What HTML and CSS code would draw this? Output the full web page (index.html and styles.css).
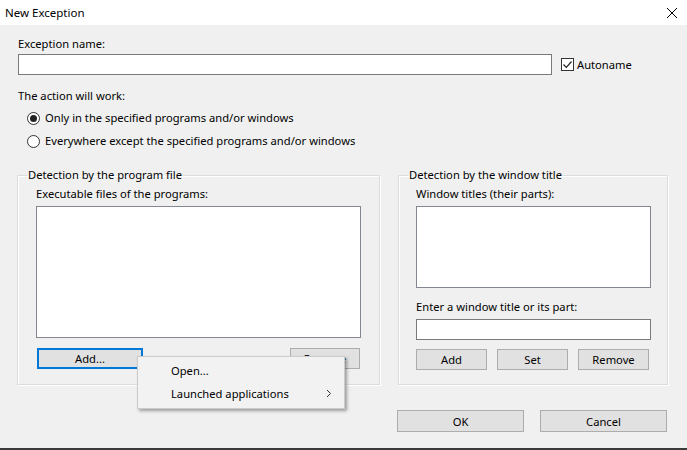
FILE: index.html
```html
<!DOCTYPE html>
<html lang="en">
<head>
    <meta charset="UTF-8">
    <title>New Exception</title>
    <link rel="stylesheet" href="styles.css">
</head>
<body>
    <div class="dialog">
        <div class="titlebar">
            <span class="title">New Exception</span>
            <svg class="close-icon" width="12" height="12" viewBox="0 0 12 12">
                <path d="M1 1 L11 11 M11 1 L1 11" stroke="#000" stroke-width="1" fill="none"/>
            </svg>
        </div>

        <div class="content">
            <div class="label">Exception name:</div>
            <div class="name-row">
                <div class="textbox name-box"></div>
                <label class="check">
                    <span class="checkbox">
                        <svg width="11" height="11" viewBox="0 0 11 11">
                            <path d="M1.5 5.5 L4.3 8.3 L9.5 2.5" stroke="#222" stroke-width="1.2" fill="none"/>
                        </svg>
                    </span>
                    Autoname
                </label>
            </div>

            <div class="label action-label">The action will work:</div>
            <div class="radios">
                <div class="radio-row"><span class="radio checked"></span>Only in the specified programs and/or windows</div>
                <div class="radio-row"><span class="radio"></span>Everywhere except the specified programs and/or windows</div>
            </div>

            <div class="groups">
                <fieldset class="group group-program">
                    <legend>Detection by the program file</legend>
                    <div class="label">Executable files of the programs:</div>
                    <div class="listbox list-programs"></div>
                    <div class="btn-row spread">
                        <div class="menu-anchor">
                            <button class="btn btn-add focused">Add...</button>
                            <div class="context-menu">
                                <div class="menu-item">Open...</div>
                                <div class="menu-item">Launched applications
                                    <svg class="chevron" width="6" height="9" viewBox="0 0 6 9">
                                        <path d="M1 1 L4.5 4.5 L1 8" stroke="#333" stroke-width="1" fill="none"/>
                                    </svg>
                                </div>
                            </div>
                        </div>
                        <button class="btn btn-remove-prog">Remove</button>
                    </div>
                </fieldset>

                <fieldset class="group group-window">
                    <legend>Detection by the window title</legend>
                    <div class="label">Window titles (their parts):</div>
                    <div class="listbox list-titles"></div>
                    <div class="label enter-label">Enter a window title or its part:</div>
                    <div class="textbox title-box"></div>
                    <div class="btn-row">
                        <button class="btn btn-small">Add</button>
                        <button class="btn btn-small">Set</button>
                        <button class="btn btn-small">Remove</button>
                    </div>
                </fieldset>
            </div>

            <div class="footer-buttons">
                <button class="btn btn-wide">OK</button>
                <button class="btn btn-wide">Cancel</button>
            </div>
        </div>
    </div>
</body>
</html>
```

FILE: styles.css
```css
/* General Styling */
body {
    margin: 0;
    padding: 0;
    font-family: 'Noto Sans', 'Open Sans', sans-serif;
    font-size: 11.2px;
    color: #000;
    background-color: #f0f0f0;
}

.dialog {
    width: 687px;
    height: 450px;
    box-sizing: border-box;
    background-color: #f0f0f0;
    border-bottom: 2px solid #3a3a3a;
    overflow: hidden;
}

/* Title bar */
.titlebar {
    height: 25px;
    background-color: #fff;
    display: flex;
    align-items: center;
    justify-content: space-between;
    padding: 0 9px 0 5px;
}

.title {
    font-size: 11.5px;
    line-height: 16px;
}

.content {
    padding: 11px 19px 0 18px;
}

.label {
    line-height: 16px;
    height: 16px;
}

/* Exception name */
.name-row {
    display: flex;
    align-items: center;
    margin-top: 2px;
}

.textbox {
    background-color: #fff;
    border: 1px solid #7a7a7a;
    box-sizing: border-box;
    height: 21px;
}

.name-box {
    width: 534px;
}

.check {
    display: flex;
    align-items: center;
    margin-left: 9px;
    line-height: 16px;
}

.checkbox {
    width: 13px;
    height: 13px;
    box-sizing: border-box;
    border: 1px solid #333;
    background-color: #fff;
    margin-right: 3px;
    display: flex;
    align-items: center;
    justify-content: center;
}

.action-label {
    margin-top: 13px;
}

/* Radios */
.radios {
    margin-top: 6px;
    padding-left: 9px;
}

.radio-row {
    display: flex;
    align-items: center;
    line-height: 16px;
    height: 16px;
    margin-bottom: 7px;
}

.radio {
    width: 13px;
    height: 13px;
    box-sizing: border-box;
    border: 1px solid #333;
    border-radius: 50%;
    background-color: #fff;
    margin-right: 5px;
    position: relative;
}

.radio.checked::after {
    content: '';
    position: absolute;
    left: 2px;
    top: 2px;
    width: 7px;
    height: 7px;
    border-radius: 50%;
    background-color: #222;
}

/* Group boxes */
.groups {
    display: flex;
    justify-content: space-between;
    margin-top: 18px;
}

.group {
    margin: 0;
    border: 1px solid #dcdcdc;
    box-shadow: inset 1px 1px 0 #fff, 1px 1px 0 #fff;
    box-sizing: border-box;
    min-width: 0;
    flex: none;
}

.group legend {
    padding: 0 1px;
    line-height: 16px;
}

.group-program {
    width: 363px;
    height: 218px;
    margin-left: -1px;
    padding: 3px 18px 15px 18px;
}

.group-program legend {
    margin-left: -9px;
}

.group-window {
    width: 270px;
    height: 218px;
    padding: 3px 16px 15px 17px;
}

.group-window legend {
    margin-left: -8px;
}

.listbox {
    background-color: #fff;
    border: 1px solid #828790;
    box-sizing: border-box;
    margin-top: 4px;
}

.list-programs {
    height: 132px;
    width: 325px;
}

.list-titles {
    height: 82px;
    width: 235px;
}

.enter-label {
    margin-top: 11px;
}

.title-box {
    margin-top: 4px;
    width: 235px;
}

/* Buttons */
.btn {
    font-family: inherit;
    font-size: 11.2px;
    color: #000;
    background-color: #e1e1e1;
    border: 1px solid #adadad;
    height: 21px;
    padding: 0;
    box-sizing: border-box;
}

.btn-row {
    display: flex;
    gap: 10px;
    margin-top: 10px;
}

.btn-row.spread {
    justify-content: space-between;
    width: 323px;
    margin-left: 1px;
}

.btn-add {
    width: 106px;
}

.btn.focused {
    border: 2px solid #0078d7;
}

.btn-remove-prog {
    width: 70px;
}

.btn-small {
    width: 71px;
}

.group-window .btn-row {
    margin-top: 9px;
}

.footer-buttons {
    display: flex;
    justify-content: flex-end;
    gap: 16px;
    margin-top: 25px;
    margin-right: 1px;
}

.btn-wide {
    width: 127px;
    height: 22px;
}

/* Context menu */
.menu-anchor {
    position: relative;
}

.context-menu {
    position: absolute;
    left: 100px;
    top: 8px;
    width: 208px;
    box-sizing: border-box;
    padding: 2px 0 3px 0;
    background-color: #f2f2f2;
    border: 1px solid #cccccc;
    box-shadow: 2px 2px 3px rgba(0, 0, 0, 0.35);
    z-index: 10;
}

.menu-item {
    height: 23px;
    line-height: 23px;
    padding-left: 33px;
    position: relative;
}

.chevron {
    position: absolute;
    right: 12px;
    top: 7px;
}
```
